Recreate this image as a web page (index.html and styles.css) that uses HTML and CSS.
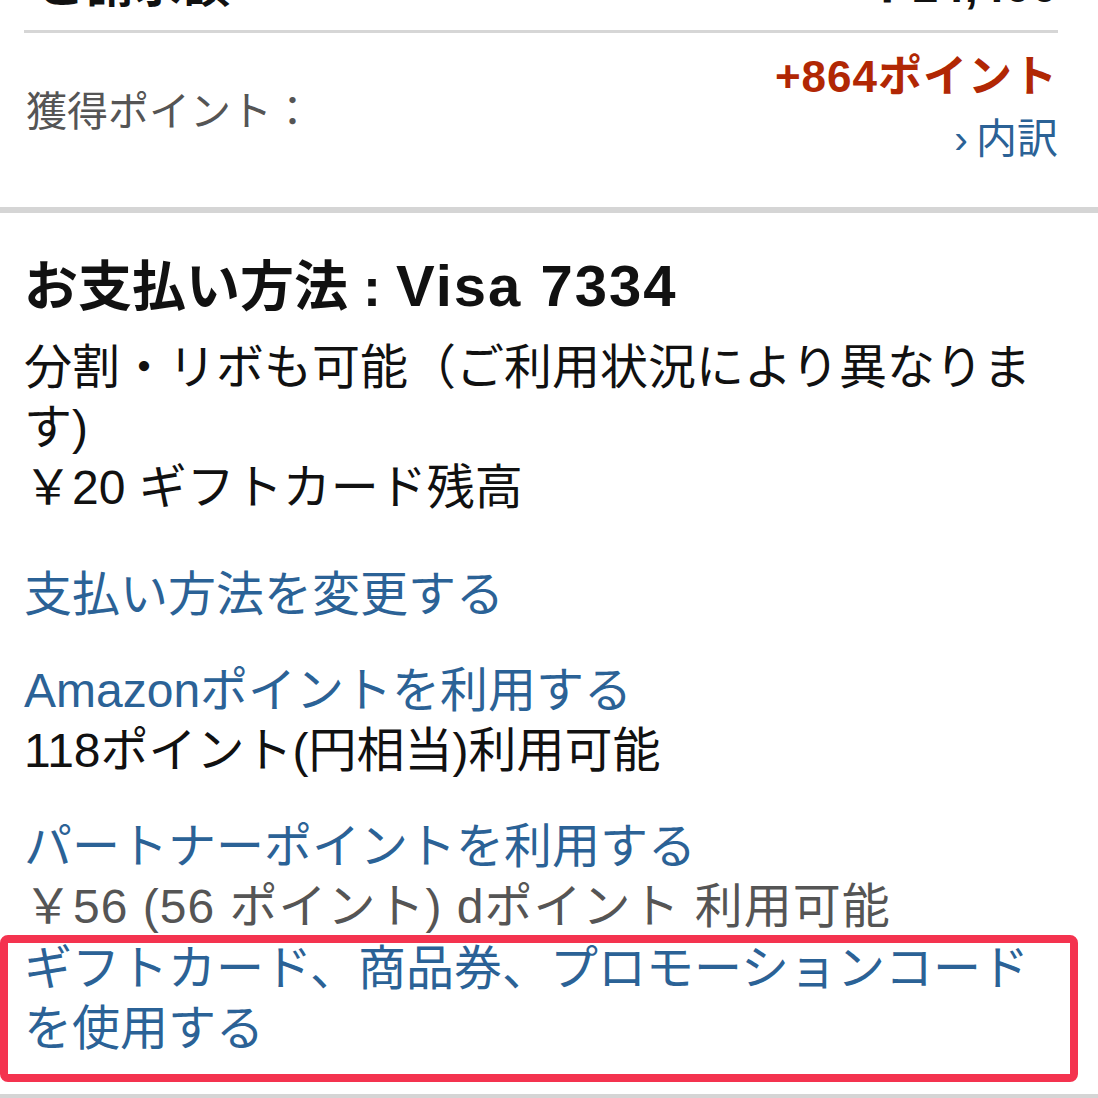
FILE: index.html
```html
<!DOCTYPE html>
<html lang="ja">
<head>
    <meta charset="UTF-8">
    <meta name="viewport" content="width=device-width, initial-scale=1.0">
    <title>お支払い方法</title>
    <link rel="stylesheet" href="styles.css">
</head>
<body>
    <div class="page">
        <div class="summary">
            <div class="total-row">
                <span class="total-label">ご請求額</span>
                <span class="total-price">￥14,400</span>
            </div>
            <div class="thin-rule"></div>
            <div class="points-row">
                <div class="points-label">獲得ポイント：</div>
                <div class="points-value">
                    <div class="points-amount">+864ポイント</div>
                    <a class="points-detail" href="#"><span class="chevron">›</span>内訳</a>
                </div>
            </div>
        </div>

        <div class="thick-rule"></div>

        <div class="payment">
            <h2 class="payment-title">お支払い方法 : <span class="card-name">Visa 7334</span></h2>
            <div class="payment-note">分割・リボも可能（ご利用状況により異なります)</div>
            <div class="payment-note">￥20 ギフトカード残高</div>

            <div class="option first">
                <a class="link" href="#">支払い方法を変更する</a>
            </div>
            <div class="option">
                <a class="link" href="#">Amazonポイントを利用する</a>
                <div class="option-sub">118ポイント(円相当)利用可能</div>
            </div>
            <div class="option">
                <a class="link" href="#">パートナーポイントを利用する</a>
                <div class="option-sub muted">￥56 (56 ポイント) dポイント 利用可能</div>
            </div>
            <div class="option gift">
                <a class="link" href="#">ギフトカード、商品券、プロモーションコードを使用する</a>
                <span class="highlight"></span>
            </div>
        </div>

        <div class="thick-rule"></div>
    </div>
</body>
</html>
```

FILE: styles.css
```css
body {
    margin: 0;
    padding: 0;
    background: #ffffff;
    font-family: "Liberation Sans", "Noto Sans CJK JP", sans-serif;
    color: #111111;
    overflow: hidden;
}

a {
    text-decoration: none;
}

.page {
    width: 1098px;
    margin-top: -44px;
}

.summary {
    padding: 0 40px 0 24px;
}

.total-row {
    display: flex;
    justify-content: space-between;
    font-size: 48px;
    line-height: 60px;
    font-weight: bold;
}

.total-label {
    padding-left: 14px;
}

.thin-rule {
    height: 3px;
    background: #d6d6d6;
    margin-top: 14px;
}

.points-row {
    display: flex;
    justify-content: space-between;
    align-items: center;
    padding: 13px 0 37px;
}

.points-label {
    font-size: 41px;
    color: #555555;
    padding-left: 2px;
}

.points-value {
    display: flex;
    flex-direction: column;
    align-items: flex-end;
    line-height: 62px;
}

.points-amount {
    font-size: 44px;
    font-weight: bold;
    letter-spacing: 1px;
    color: #b12704;
}

.points-detail {
    font-size: 41px;
    color: #2b6296;
}

.chevron {
    margin-right: 8px;
}

.thick-rule {
    height: 6px;
    background: #d5d5d5;
}

.payment {
    padding: 41px 40px 35px 24px;
}

.payment-title {
    margin: 0 0 19px;
    font-size: 54px;
    line-height: 64px;
    font-weight: bold;
    color: #111111;
}

.card-name {
    font-size: 58px;
    letter-spacing: 2px;
}

.payment-note {
    font-size: 48px;
    line-height: 60px;
}

.option {
    margin-top: 36px;
    font-size: 48px;
    line-height: 60px;
}

.option.first {
    margin-top: 47px;
}

.option.gift {
    margin-top: 2px;
    position: relative;
}

.link {
    display: block;
    color: #2b6296;
}

.option-sub {
    color: #111111;
}

.option-sub.muted {
    color: #555555;
    letter-spacing: 1px;
}

.highlight {
    position: absolute;
    top: -4px;
    left: -24px;
    right: -20px;
    bottom: -23px;
    border: 8px solid #f4334f;
    border-radius: 8px;
    pointer-events: none;
}
```
